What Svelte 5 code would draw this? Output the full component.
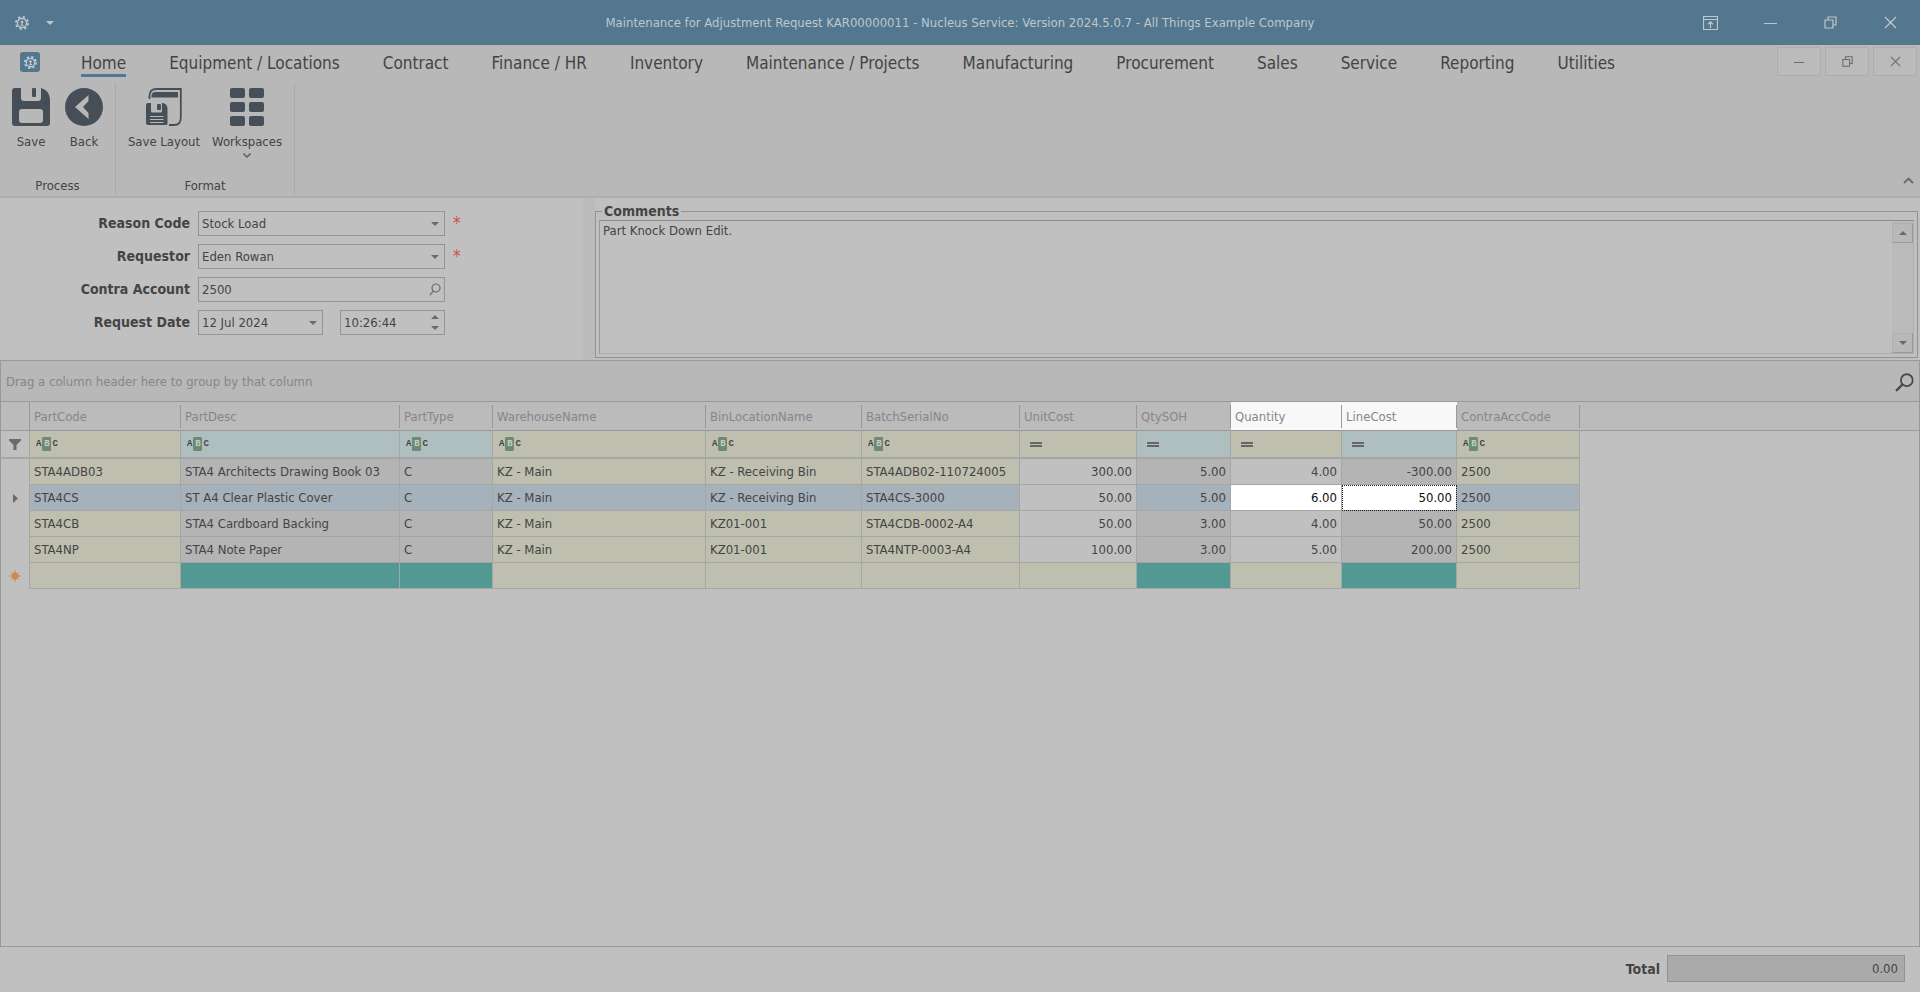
<script lang="ts">
	type Column = {
		name: string;
		width: number;
		kind: 'edit' | 'readonly' | 'plain';
		numeric?: boolean;
		focus?: boolean;
	};

	const tabs = [
		'Home',
		'Equipment / Locations',
		'Contract',
		'Finance / HR',
		'Inventory',
		'Maintenance / Projects',
		'Manufacturing',
		'Procurement',
		'Sales',
		'Service',
		'Reporting',
		'Utilities'
	];

	const columns: Column[] = [
		{ name: 'PartCode', width: 151, kind: 'edit' },
		{ name: 'PartDesc', width: 219, kind: 'readonly' },
		{ name: 'PartType', width: 93, kind: 'readonly' },
		{ name: 'WarehouseName', width: 213, kind: 'edit' },
		{ name: 'BinLocationName', width: 156, kind: 'edit' },
		{ name: 'BatchSerialNo', width: 158, kind: 'edit' },
		{ name: 'UnitCost', width: 117, kind: 'plain', numeric: true },
		{ name: 'QtySOH', width: 94, kind: 'readonly', numeric: true },
		{ name: 'Quantity', width: 111, kind: 'plain', numeric: true, focus: true },
		{ name: 'LineCost', width: 115, kind: 'readonly', numeric: true, focus: true },
		{ name: 'ContraAccCode', width: 123, kind: 'edit' }
	];

	const rows = [
		['STA4ADB03', 'STA4 Architects Drawing Book 03', 'C', 'KZ - Main', 'KZ - Receiving Bin', 'STA4ADB02-110724005', '300.00', '5.00', '4.00', '-300.00', '2500'],
		['STA4CS', 'ST A4 Clear Plastic Cover', 'C', 'KZ - Main', 'KZ - Receiving Bin', 'STA4CS-3000', '50.00', '5.00', '6.00', '50.00', '2500'],
		['STA4CB', 'STA4 Cardboard Backing', 'C', 'KZ - Main', 'KZ01-001', 'STA4CDB-0002-A4', '50.00', '3.00', '4.00', '50.00', '2500'],
		['STA4NP', 'STA4 Note Paper', 'C', 'KZ - Main', 'KZ01-001', 'STA4NTP-0003-A4', '100.00', '3.00', '5.00', '200.00', '2500']
	];

	let activeTab = $state('Home');
	let selected = $state(1);
	let reason = $state('Stock Load');
	let requestor = $state('Eden Rowan');
	let account = $state('2500');
	let date = $state('12 Jul 2024');
	let time = $state('10:26:44');
	let comments = $state('Part Knock Down Edit.');
</script>

{#snippet gear(size: number)}
	<svg width={size} height={size} viewBox="0 0 16 16" fill="none" stroke="currentColor">
		<circle cx="8" cy="8" r="5.2" stroke-width="1.6" />
		<circle cx="8" cy="8" r="7" stroke-width="2" stroke-dasharray="2.75 2.75" />
		<circle cx="8" cy="6.8" r="1.5" fill="currentColor" stroke="none" />
		<path d="M8 7v4M6.2 10.6h3.6" stroke-width="1.2" />
	</svg>
{/snippet}

{#snippet restore(size: number)}
	<svg width={size} height={size} viewBox="0 0 13 13" fill="none" stroke="currentColor" stroke-width="1.2">
		<path d="M1 4h8v8H1zM4 4V1h8v8H9" />
	</svg>
{/snippet}

{#snippet close(size: number)}
	<svg width={size} height={size} viewBox="0 0 13 13" fill="none" stroke="currentColor" stroke-width="1.3">
		<path d="M1 1l11 11M12 1L1 12" />
	</svg>
{/snippet}

{#snippet minus(size: number)}
	<svg width={size} height="13" viewBox="0 0 {size} 13" fill="none" stroke="currentColor">
		<path d="M0 7.5h{size}" />
	</svg>
{/snippet}

{#snippet arrow()}
	<svg class="arrow" width="8" height="4" viewBox="0 0 8 4"><path d="M0 0h8L4 4z" fill="currentColor" /></svg>
{/snippet}

{#snippet search(size: number)}
	<svg width={size} height={size} viewBox="0 0 18 18" fill="none" stroke="currentColor">
		<circle cx="11.2" cy="6.8" r="5.6" stroke-width="1.7" />
		<path d="M7.2 10.8L1 17" stroke-width="2.2" />
	</svg>
{/snippet}

<div class="window">
	<header class="titlebar">
		<div class="quick">
			<button aria-label="System menu">{@render gear(14)}</button>
			<button aria-label="Quick access">{@render arrow()}</button>
		</div>
		<h1>Maintenance for Adjustment Request KAR00000011 - Nucleus Service: Version 2024.5.0.7 - All Things Example Company</h1>
		<div class="caption">
			<button aria-label="Full screen">
				<svg width="15" height="14" viewBox="0 0 15 14" fill="none" stroke="currentColor">
					<path d="M.5 .5h14v13H.5zM.5 3.5h14M7.5 12V6M5 8.2l2.5-2.4L10 8.2" stroke-width="1.2" />
				</svg>
			</button>
			<button aria-label="Minimize">{@render minus(13)}</button>
			<button aria-label="Restore">{@render restore(13)}</button>
			<button aria-label="Close">{@render close(13)}</button>
		</div>
	</header>

	<nav class="menu">
		<button class="app" aria-label="Application menu">{@render gear(13)}</button>
		<div class="tabs">
			{#each tabs as tab}
				<button class="tab" class:active={tab === activeTab} onclick={() => (activeTab = tab)}>{tab}</button>
			{/each}
		</div>
		<div class="child-caption">
			<button aria-label="Minimize document">{@render minus(10)}</button>
			<button aria-label="Restore document">{@render restore(11)}</button>
			<button aria-label="Close document">{@render close(11)}</button>
		</div>
	</nav>

	<section class="ribbon">
		<div class="group process">
			<div class="tools">
				<button class="tool">
					<svg width="38" height="38" viewBox="0 0 38 38">
						<path fill="currentColor" fill-rule="evenodd" d="M3 0h6v10q0 3 3 3h14q3 0 3-3V0q8 2 9 11v24q0 3-3 3H3q-3 0-3-3V3q0-3 3-3zM10 21q-3 0-3 3v8q0 3 3 3h18q3 0 3-3v-8q0-3-3-3z" />
						<rect x="20" y="0" width="4" height="9" rx="1" fill="currentColor" />
					</svg>
					Save
				</button>
				<button class="tool">
					<svg width="38" height="38" viewBox="0 0 38 38">
						<circle cx="19" cy="19" r="19" fill="currentColor" />
						<path d="M23.5 7L10 19l13.5 12v-6L18 19l5.5-6z" fill="#b8b8b8" />
					</svg>
					Back
				</button>
			</div>
			<span class="group-name">Process</span>
		</div>
		<div class="group format">
			<div class="tools">
				<button class="tool">
					<svg width="36" height="38" viewBox="0 0 36 38">
						<path d="M3.5 11V8q0-7 7-7H34.8v29q0 7-7 7H23" fill="none" stroke="currentColor" stroke-width="1.8" />
						<path d="M5.5 9.5V8q0-4 4-4H32v5.5z" fill="currentColor" />
						<path fill="currentColor" d="M2 15h3v8q0 1.5 1.5 1.5h8q1.5 0 1.5-1.5v-8h1q4 1 4.5 5v15.5q0 1.5-1.5 1.5H2q-2 0-2-2V17q0-2 2-2z" />
						<rect x="11" y="16" width="4" height="6" rx="1" fill="currentColor" />
						<path d="M4 28.5h13.5M4 31.5h13.5M4 34.5h13.5" stroke="#b8b8b8" stroke-width="1" />
					</svg>
					Save Layout
				</button>
				<button class="tool">
					<svg width="34" height="38" viewBox="0 0 34 38" fill="currentColor">
						{#each [0, 14, 28] as y}
							<rect x="0" {y} width="15" height="10" rx="2" />
							<rect x="19" {y} width="15" height="10" rx="2" />
						{/each}
					</svg>
					Workspaces
					<svg class="more" width="8" height="5" viewBox="0 0 8 5" fill="none" stroke="currentColor" stroke-width="1.6">
						<path d="M.5 .5L4 4L7.5 .5" />
					</svg>
				</button>
			</div>
			<span class="group-name">Format</span>
		</div>
		<button class="collapse" aria-label="Collapse the ribbon">
			<svg width="11" height="7" viewBox="0 0 11 7" fill="none" stroke="currentColor" stroke-width="1.8">
				<path d="M1 6l4.5-4.5L10 6" />
			</svg>
		</button>
	</section>

	<section class="details">
		<form class="form">
			<label for="reason">Reason Code</label>
			<div class="field">
				<select id="reason" bind:value={reason}><option>Stock Load</option></select>
				{@render arrow()}
			</div>
			<span class="required">*</span>

			<label for="requestor">Requestor</label>
			<div class="field">
				<select id="requestor" bind:value={requestor}><option>Eden Rowan</option></select>
				{@render arrow()}
			</div>
			<span class="required">*</span>

			<label for="account">Contra Account</label>
			<div class="field">
				<input id="account" type="text" bind:value={account} />
				<button type="button" class="lookup" aria-label="Find account">
					<svg width="12" height="13" viewBox="0 0 12 13" fill="none" stroke="currentColor" stroke-width="1.2">
						<circle cx="7" cy="5" r="4" />
						<path d="M4.4 8.2L.8 12" />
					</svg>
				</button>
			</div>
			<span></span>

			<label for="date">Request Date</label>
			<div class="pair">
				<div class="field date">
					<input id="date" type="text" bind:value={date} />
					{@render arrow()}
				</div>
				<div class="field time">
					<input type="text" aria-label="Request time" bind:value={time} />
					<div class="spin">
						<button type="button" class="up" aria-label="Later">{@render arrow()}</button>
						<button type="button" aria-label="Earlier">{@render arrow()}</button>
					</div>
				</div>
			</div>
		</form>
		<div class="splitter"></div>
		<fieldset class="comments">
			<legend><label for="comments">Comments</label></legend>
			<div class="memo">
				<textarea id="comments" bind:value={comments}></textarea>
				<div class="scroll">
					<button class="up" aria-label="Scroll up">{@render arrow()}</button>
					<button aria-label="Scroll down">{@render arrow()}</button>
				</div>
			</div>
		</fieldset>
	</section>

	<main class="grid">
		<div class="group-panel">
			<span>Drag a column header here to group by that column</span>
			<button aria-label="Find in grid">{@render search(19)}</button>
		</div>
		<div class="head-band">
			<table>
				<colgroup>
					<col style="width: 29px" />
					{#each columns as column}
						<col style="width: {column.width}px" />
					{/each}
				</colgroup>
				<thead>
					<tr>
						<th class="indicator"></th>
						{#each columns as column}
							<th class:lit={column.focus}><span>{column.name}</span></th>
						{/each}
					</tr>
				</thead>
				<tbody>
					<tr class="filter">
						<td class="indicator">
							<svg width="12" height="11" viewBox="0 0 12 11"><path d="M0 0h12v1.5L7.5 6v5h-3V6L0 1.5z" fill="currentColor" /></svg>
						</td>
						{#each columns as column}
							<td class={column.kind}>
								{#if column.numeric}
									<span class="equals"></span>
								{:else}
									<span class="abc">A<b>B</b>C</span>
								{/if}
							</td>
						{/each}
					</tr>
					{#each rows as row, i}
						<tr class:selected={i === selected} onclick={() => (selected = i)}>
							<td class="indicator">
								{#if i === selected}
									<svg width="5" height="9" viewBox="0 0 5 9"><path d="M0 0l5 4.5L0 9z" fill="currentColor" /></svg>
								{/if}
							</td>
							{#each columns as column, c}
								<td
									class={column.kind}
									class:numeric={column.numeric}
									class:lit={column.focus && i === 1}
									class:focused={column.name === 'LineCost' && i === 1}>{row[c]}</td
								>
							{/each}
						</tr>
					{/each}
					<tr class="new">
						<td class="indicator">
							<svg width="12" height="12" viewBox="0 0 12 12" stroke="#c98b45" stroke-width="1">
								<path d="M6 0v12M0 6h12M2 2l8 8M10 2l-8 8" />
								<circle cx="6" cy="6" r="3" fill="#c98b45" />
							</svg>
						</td>
						{#each columns as column}
							<td class={column.kind}></td>
						{/each}
					</tr>
				</tbody>
			</table>
		</div>
	</main>

	<footer class="totals">
		<label for="total">Total</label>
		<input id="total" type="text" value="0.00" readonly />
	</footer>
</div>

<style>
	:global(body) {
		background: #c0c0c0;
	}

	.window {
		display: flex;
		flex-direction: column;
		min-height: 100vh;
		box-sizing: border-box;
		font-family: 'DejaVu Sans Condensed', Tahoma, 'Noto Sans', sans-serif;
		font-size: 13px;
		line-height: 16px;
		color: #444;
		background: #c0c0c0;
	}

	.window :global(*) {
		box-sizing: border-box;
	}

	button,
	input,
	select,
	textarea {
		margin: 0;
		padding: 0;
		border: 0;
		border-radius: 0;
		background: none;
		font: inherit;
		color: inherit;
		outline: none;
	}

	button {
		display: flex;
		align-items: center;
		justify-content: center;
	}

	svg {
		display: block;
		flex: none;
	}

	/* Title bar */
	.titlebar {
		display: grid;
		grid-template-columns: 240px 1fr 240px;
		align-items: center;
		height: 45px;
		background: #52778f;
		color: #bfc7cc;
	}

	.titlebar h1 {
		margin: 0;
		font-size: 13px;
		font-weight: normal;
		text-align: center;
		white-space: nowrap;
	}

	.quick {
		display: flex;
		gap: 17px;
		padding-left: 15px;
	}

	.caption {
		display: flex;
		justify-content: flex-end;
	}

	.caption button {
		width: 60px;
		height: 45px;
	}

	/* Ribbon tabs */
	.menu {
		display: flex;
		align-items: flex-start;
		height: 37px;
		padding: 0 3px 0 20px;
		background: #b8b8b8;
	}

	.app {
		width: 20px;
		height: 20px;
		margin-top: 7px;
		border-radius: 3px;
		background: #52778f;
		color: #c5ccd0;
	}

	.tabs {
		display: flex;
		flex: 1;
		gap: 43px;
		padding-left: 41px;
	}

	.tab {
		height: 32px;
		padding-top: 6px;
		border-bottom: 3px solid transparent;
		font-size: 17px;
		line-height: 20px;
		white-space: nowrap;
	}

	.tab.active {
		border-bottom-color: #52778f;
	}

	.child-caption {
		display: flex;
		gap: 4px;
		padding-top: 2px;
	}

	.child-caption button {
		width: 44px;
		height: 29px;
		border: 1px solid #adadad;
		border-radius: 2px;
		background: #bbb;
		color: #6a6a6a;
	}

	/* Ribbon */
	.ribbon {
		display: flex;
		height: 116px;
		padding-top: 1px;
		background: #b8b8b8;
		border-bottom: 2px solid #aeaeae;
	}

	.group {
		display: flex;
		flex-direction: column;
		align-items: center;
		height: 111px;
		border-right: 1px solid #a9a9a9;
	}

	.process {
		width: 116px;
	}

	.format {
		width: 179px;
	}

	.tools {
		display: flex;
		flex: 1;
		align-items: flex-start;
		padding-top: 5px;
	}

	.process .tools {
		gap: 15px;
	}

	.format .tools {
		gap: 12px;
	}

	.tool {
		flex-direction: column;
		min-width: 38px;
		white-space: nowrap;
	}

	.tool > svg:first-child {
		margin-bottom: 8px;
		color: #464e58;
	}

	.more {
		margin-top: 3px;
		color: #666;
	}

	.collapse {
		align-self: flex-end;
		margin: 0 6px 12px auto;
		color: #6a6a6a;
	}

	/* Header fields */
	.details {
		display: flex;
		height: 162px;
	}

	.form {
		display: grid;
		grid-template-columns: 190px 247px 1fr;
		grid-auto-rows: 25px;
		gap: 8px;
		width: 583px;
		padding-top: 13px;
	}

	.form label,
	.comments legend,
	.totals label {
		font-size: 14px;
		font-weight: bold;
	}

	.form label {
		line-height: 25px;
		text-align: right;
	}

	.field {
		position: relative;
		display: flex;
		align-items: center;
		width: 247px;
		border: 1px solid #949494;
	}

	.field input,
	.field select {
		flex: 1;
		min-width: 0;
		height: 23px;
		padding-left: 3px;
		appearance: none;
	}

	.arrow {
		color: #6a6a6a;
	}

	.titlebar .arrow {
		color: #bfc7cc;
	}

	.field > .arrow {
		position: absolute;
		right: 5px;
		pointer-events: none;
	}

	.lookup {
		width: 18px;
		color: #6a6a6a;
	}

	.required {
		color: #c94f53;
		font-size: 17px;
		line-height: 25px;
	}

	.pair {
		display: flex;
		justify-content: space-between;
	}

	.date {
		width: 125px;
	}

	.time {
		width: 105px;
	}

	.spin {
		display: flex;
		flex-direction: column;
		gap: 7px;
		padding-right: 5px;
	}

	.up .arrow {
		transform: rotate(180deg);
	}

	.splitter {
		width: 12px;
		background: #bbb;
	}

	.comments {
		display: flex;
		flex: 1;
		min-width: 0;
		height: 155px;
		margin: 5px 2px 0 0;
		padding: 1px 3px 3px;
		border: 1px solid #929292;
	}

	.comments legend {
		margin-left: 3px;
		padding: 0 2px;
		line-height: 16px;
	}

	.memo {
		display: flex;
		flex: 1;
		border: 1px solid #aeaeae;
		border-top-color: #8c8c8c;
		border-left-color: #999;
	}

	.memo textarea {
		flex: 1;
		padding: 2px 3px;
		resize: none;
	}

	.scroll {
		display: flex;
		flex-direction: column;
		justify-content: space-between;
		width: 21px;
		padding: 2px 0 0;
		background: #bababa;
	}

	.scroll button {
		height: 20px;
		border: 1px solid #b0b0b0;
		border-right-color: #999;
		border-bottom-color: #999;
		background: #b8b8b8;
	}

	/* Grid */
	.grid {
		flex: 1;
		border: 1px solid #999;
	}

	.group-panel {
		display: flex;
		align-items: center;
		justify-content: space-between;
		height: 41px;
		padding: 2px 5px 0;
		border-bottom: 1px solid #999;
		background: #b8b8b8;
		color: #868686;
	}

	.group-panel button {
		color: #4a4a4a;
	}

	.head-band {
		background: linear-gradient(#bbb 28px, #999 28px, #999 29px, #c0c0c0 29px);
	}

	table {
		table-layout: fixed;
		width: 1579px;
		border-collapse: separate;
		border-spacing: 0;
	}

	th {
		height: 29px;
		padding: 2px 0;
		border-bottom: 1px solid #999;
		font-weight: normal;
		text-align: left;
		color: #868686;
	}

	th span {
		display: block;
		padding-left: 4px;
		border-right: 1px solid #999;
		line-height: 23px;
	}

	th.indicator {
		border-right: 1px solid #999;
	}

	th.lit {
		background: #f8f8f8;
	}

	td {
		height: 26px;
		padding: 0 4px;
		border-right: 1px solid #a6a6a6;
		border-bottom: 1px solid #a6a6a6;
		white-space: nowrap;
		overflow: hidden;
	}

	td.indicator {
		padding: 0;
		border-bottom: 0;
		color: #6a6a6a;
	}

	td.indicator svg {
		margin: 0 auto;
	}

	.filter td {
		height: 28px;
		border-bottom: 2px solid #a6a6a6;
	}

	.edit,
	.filter .plain,
	.new .plain {
		background: #bebfae;
	}

	.readonly {
		background: #b4b4b4;
	}

	.filter .readonly {
		background: #afbfbf;
	}

	.new .readonly {
		background: #529893;
	}

	.selected .edit,
	.selected .readonly {
		background: #a5b1bb;
	}

	.numeric {
		text-align: right;
	}

	td.lit,
	.selected td.lit {
		background: #fff;
		color: #111;
	}

	td.focused {
		outline: 1px dotted #222;
		outline-offset: -1px;
	}

	.abc {
		display: flex;
		align-items: center;
		gap: 1px;
		padding-left: 2px;
		font-family: 'Liberation Mono', monospace;
		font-size: 9px;
		font-weight: bold;
		line-height: 14px;
	}

	.abc b {
		width: 9px;
		border-radius: 1px;
		background: #6c8b72;
		color: #c5cfc5;
		text-align: center;
	}

	.equals {
		display: block;
		width: 12px;
		height: 5px;
		margin-left: 6px;
		border-top: 2px solid #666;
		border-bottom: 2px solid #666;
	}

	/* Totals */
	.totals {
		display: flex;
		align-items: center;
		justify-content: flex-end;
		gap: 7px;
		height: 45px;
		padding: 0 15px 2px 0;
	}

	.totals input {
		width: 238px;
		height: 27px;
		padding-right: 6px;
		border: 1px solid #929292;
		background: #aaa;
		text-align: right;
	}
</style>
